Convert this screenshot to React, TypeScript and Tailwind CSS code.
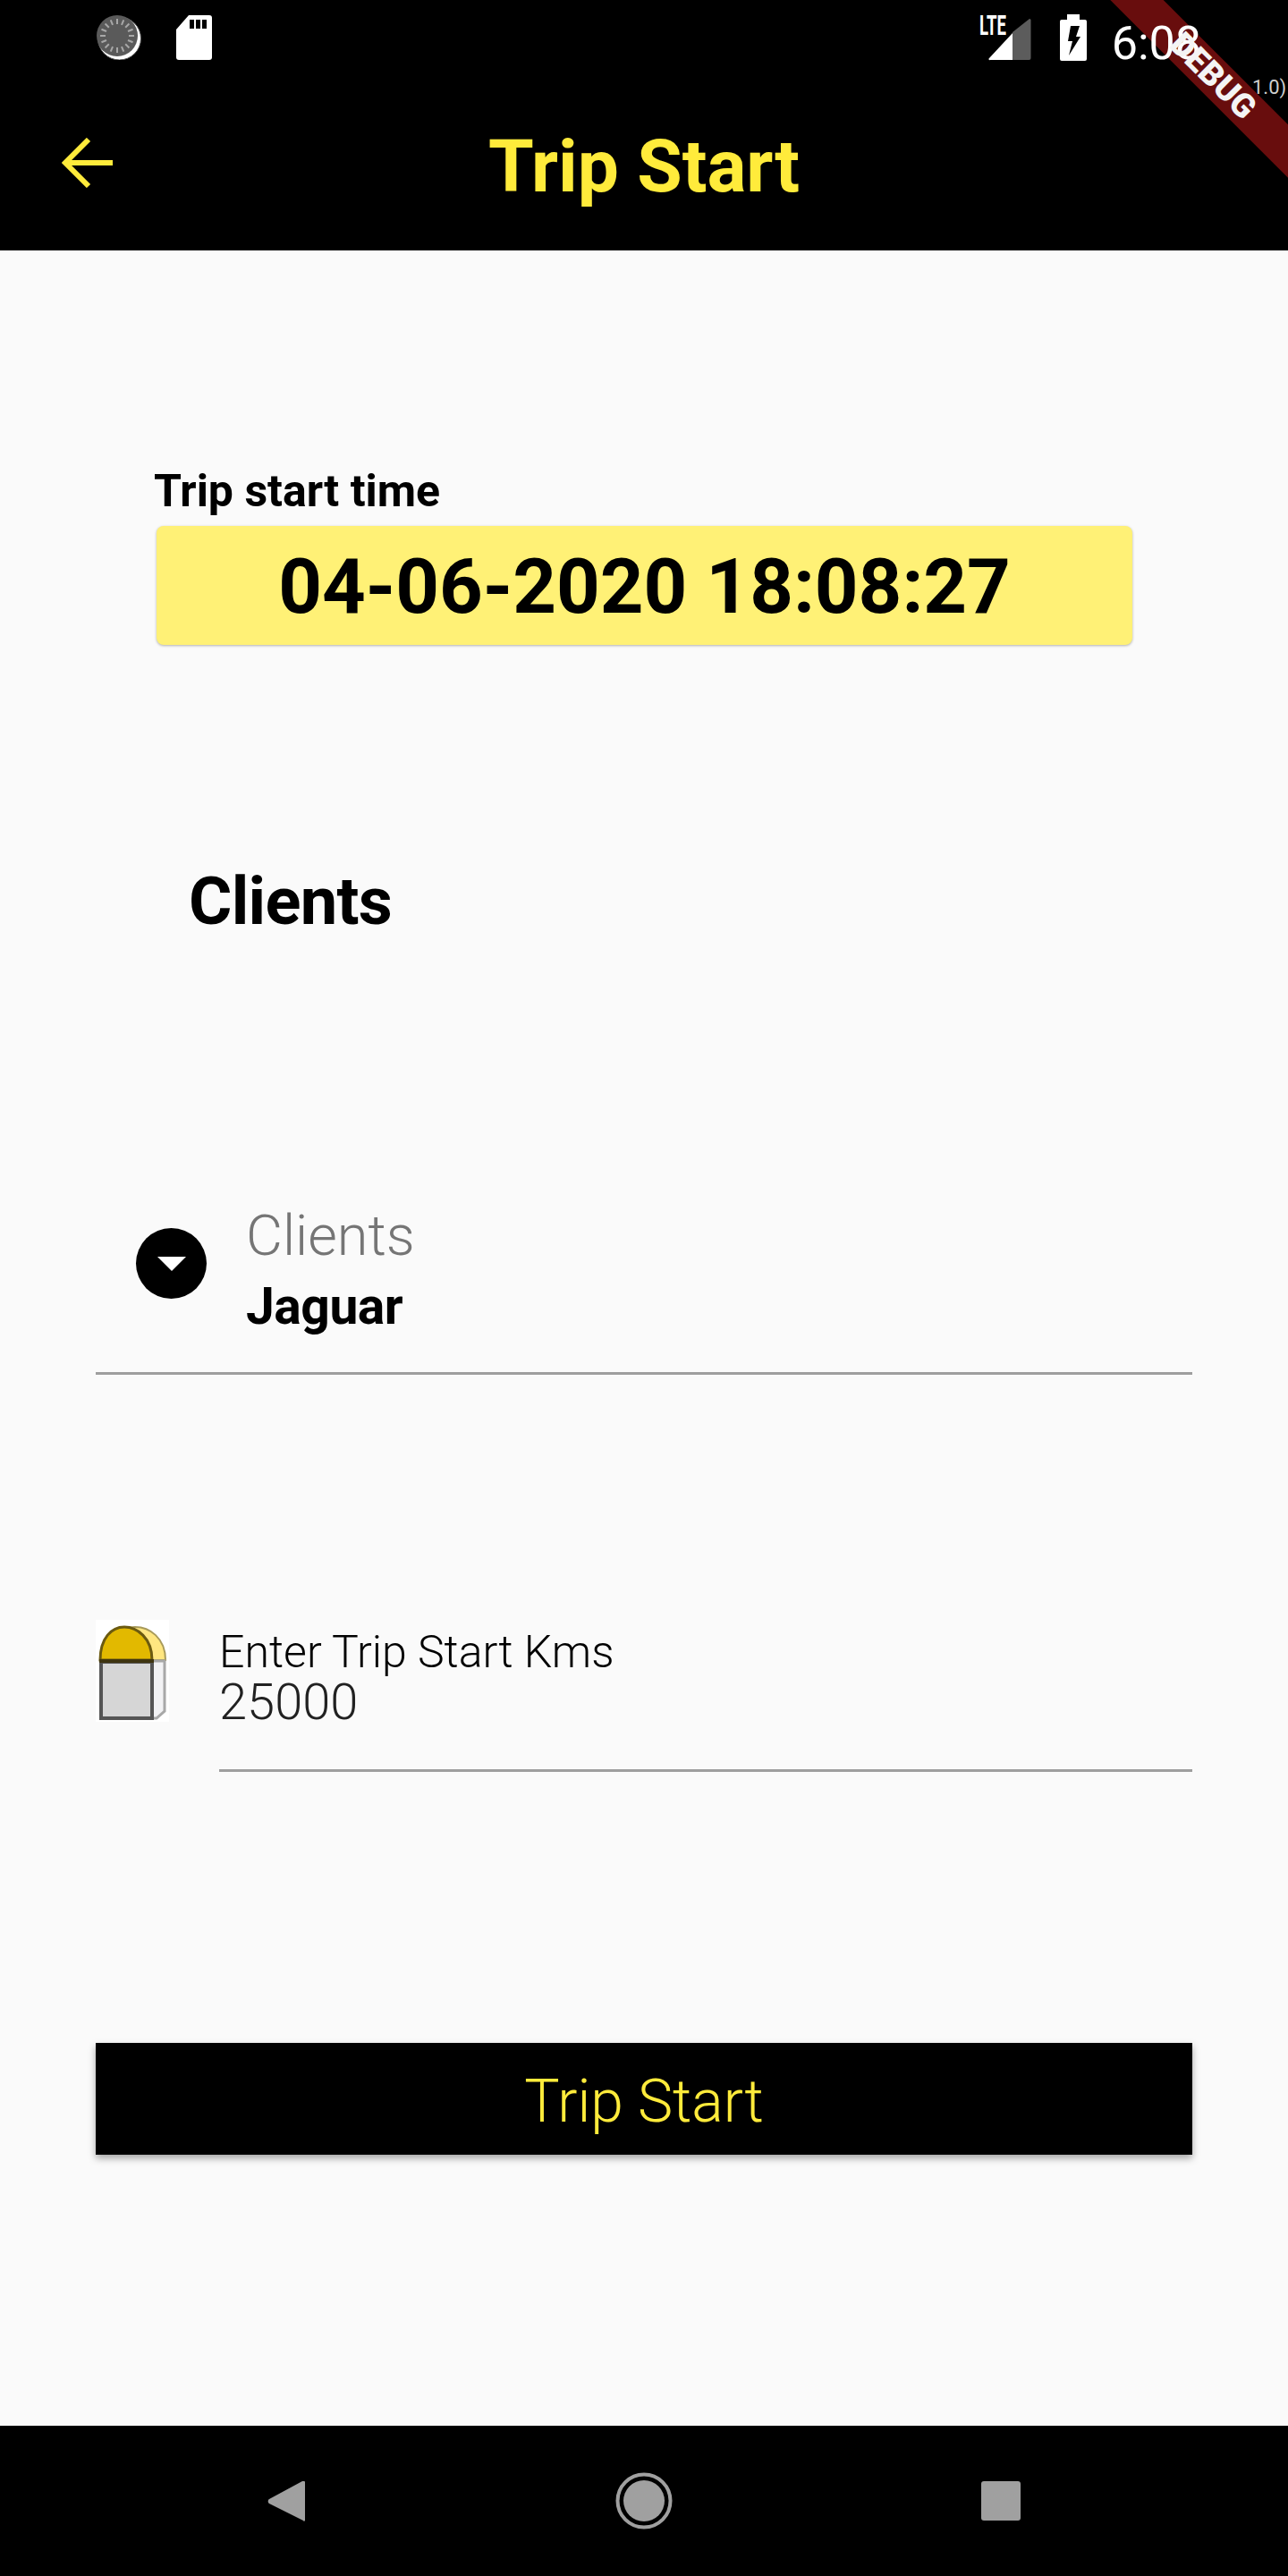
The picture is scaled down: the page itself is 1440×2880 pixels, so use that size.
const FONT = 'font-["Roboto",sans-serif]'

function SyncIcon() {
  const ticks = Array.from({ length: 16 }, (_, i) => i * 22.5)
  return (
    <svg width="50" height="50" viewBox="0 0 50 50" className="shrink-0">
      <circle cx="25.5" cy="26" r="24" fill="#fff" />
      <circle cx="25.5" cy="26" r="24" fill="none" stroke="#555" strokeWidth="1" />
      <circle cx="23" cy="23" r="23" fill="#5a5a5a" />
      {ticks.map((a) => (
        <line key={a} x1="23" y1="4" x2="23" y2="10" stroke="#a8a8a8" strokeWidth="2" transform={`rotate(${a} 23 23)`} />
      ))}
    </svg>
  )
}

function SdIcon() {
  return (
    <svg width="40" height="50" viewBox="0 0 40 50" className="shrink-0">
      <path d="M14 0H37a3 3 0 0 1 3 3V47a3 3 0 0 1-3 3H3a3 3 0 0 1-3-3V16Z" fill="#fff" />
      <rect x="15" y="5" width="5" height="10" fill="#000" />
      <rect x="22" y="5" width="5" height="10" fill="#000" />
      <rect x="29" y="5" width="5" height="10" fill="#000" />
    </svg>
  )
}

function SignalIcon() {
  return (
    <svg width="48" height="48" viewBox="0 0 48 48" className="shrink-0">
      <path d="M27 16 46 1a1.5 1.5 0 0 1 1.5 1.5V45a2 2 0 0 1-2 2H27Z" fill="#5c5c5c" />
      <path d="M27 17V47H2a1 1 0 0 1-1-2Z" fill="#fff" />
    </svg>
  )
}

function BatteryIcon() {
  return (
    <svg width="30" height="52" viewBox="0 0 30 52" className="shrink-0">
      <path d="M8 0H22V6H28a2 2 0 0 1 2 2V50a2 2 0 0 1-2 2H2a2 2 0 0 1-2-2V8a2 2 0 0 1 2-2H8Z" fill="#fff" />
      <path d="M12 13H22L18 25H23L10 46 14 30H9Z" fill="#000" />
    </svg>
  )
}

function BackArrow() {
  return (
    <svg width="58" height="56" viewBox="0 0 58 56" fill="none" stroke="#ffeb3b" strokeWidth="6">
      <path d="M57 28H4" />
      <path d="M30 2 4 28l26 26" strokeLinecap="butt" />
    </svg>
  )
}

function MilestoneIcon() {
  return (
    <svg width="82" height="114" viewBox="0 0 82 114" className="shrink-0 bg-white">
      <path d="M12 45C12 20 28 8 44 8s34 12 34 37Z" fill="#ffe680" stroke="#a89a5a" strokeWidth="2" />
      <path d="M5 45C5 20 18 8 32 8s31 12 31 37Z" fill="#e2b900" stroke="#6b5a10" strokeWidth="3" />
      <path d="M62 46H77V102L68 110H62Z" fill="#f2f2f4" stroke="#a8a8a8" strokeWidth="3" />
      <rect x="6" y="47" width="57" height="63" fill="#d6d6d6" stroke="#555" strokeWidth="4" />
      <path d="M4 46H65" stroke="#3f3510" strokeWidth="4" />
    </svg>
  )
}

export default function App() {
  return (
    <div className={`relative flex h-[2880px] w-[1440px] flex-col overflow-hidden bg-[#fafafa] ${FONT}`}>
      <header className="h-[280px] shrink-0 bg-black">
        <div className="flex h-[84px] items-start pt-[17px]">
          <div className="ml-[108px] flex gap-[39px]">
            <SyncIcon />
            <SdIcon />
          </div>
          <div className="ml-auto mr-[97px] flex items-start">
            <span className="mr-[-43px] mt-[-3px] origin-left scale-x-[0.6] text-[31px] leading-[30px] font-bold text-white">LTE</span>
            <div className="ml-[3px] mt-[3px]"><SignalIcon /></div>
            <div className="ml-[32px] mt-[-1px]"><BatteryIcon /></div>
            <span className="relative z-10 ml-[28px] mt-[7px] text-[52px] leading-[50px] text-white">6:08</span>
          </div>
        </div>
        <div className="relative flex h-[196px] items-start justify-center">
          <div className="absolute left-[69px] top-[70px]"><BackArrow /></div>
          <h1 className="mt-[52px] text-[82px] leading-[100px] font-bold text-[#ffeb3b]">Trip Start</h1>
        </div>
      </header>

      <main className="flex flex-1 flex-col">
        <div className="ml-[172px] mt-[239px] text-[50px] leading-[60px] font-bold text-black">Trip start time</div>
        <div className="ml-[175px] mt-[9px] flex h-[133px] w-[1091px] items-center justify-center rounded-[8px] bg-[#fff176] pt-[3px] shadow-[0_1px_3px_rgba(0,0,0,0.3)]">
          <span className="text-[85px] leading-none font-bold text-black">04-06-2020 18:08:27</span>
        </div>

        <h2 className="ml-[211px] mt-[242px] text-[74px] leading-[90px] font-bold tracking-[-0.7px] text-black">Clients</h2>

        <div className="mx-[107px] mt-[296px] flex h-[188px] items-start border-b-[3px] border-[#9e9e9e]">
          <div className="ml-[45px] mt-[24px] flex h-[79px] w-[79px] items-center justify-center rounded-full bg-black">
            <span className="h-0 w-0 border-x-[16px] border-t-[16px] border-x-transparent border-t-white" />
          </div>
          <div className="ml-[44px] flex flex-col">
            <span className="mt-[-3px] text-[63px] leading-[72px] font-light text-[#757575]">Clients</span>
            <span className="mt-[7px] text-[57px] leading-[72px] font-bold tracking-[-0.5px] text-black">Jaguar</span>
          </div>
        </div>

        <div className="mx-[107px] mt-[274px] flex items-start">
          <MilestoneIcon />
          <div className="ml-[56px] flex-1 border-b-[3px] border-[#9e9e9e] pb-[47px]">
            <div className="mt-[8px] text-[50px] leading-[56px] font-light text-black">Enter Trip Start Kms</div>
            <div className="text-[56px] leading-[56px] font-light text-[#212121]">25000</div>
          </div>
        </div>

        <button type="button" className="mx-[107px] mt-[303px] flex h-[125px] items-center justify-center bg-black pt-[6px] text-[66px] font-light text-[#ffeb3b] shadow-[0_4px_8px_rgba(0,0,0,0.35)]">
          Trip Start
        </button>
      </main>

      <nav className="flex h-[168px] shrink-0 items-center justify-between bg-black pl-[299px] pr-[299px]">
        <svg width="42" height="46" viewBox="0 0 42 46" fill="#a0a0a0">
          <path d="M41 1a1 1 0 0 1 1 1V44a1 1 0 0 1-2 1L2 26a3 3 0 0 1 0-5L39 1Z" />
        </svg>
        <svg width="64" height="64" viewBox="0 0 64 64" className="ml-[2px]">
          <circle cx="32" cy="32" r="29.5" fill="none" stroke="#a0a0a0" strokeWidth="4" />
          <circle cx="32" cy="32" r="23" fill="#a0a0a0" />
        </svg>
        <div className="h-[44px] w-[44px] rounded-[3px] bg-[#a0a0a0]" />
      </nav>

      <span className="absolute left-[1400px] top-[84px] text-[22px] leading-[28px] text-[#cfcfcf]">1.0)</span>
      <div className="absolute left-[1156px] top-[64px] z-20 flex h-[42px] w-[400px] rotate-45 items-center justify-center text-[37px] font-black text-[#f4f4f4]">
        DEBUG
      </div>
      <div className="absolute left-[1156px] top-[64px] h-[42px] w-[400px] rotate-45 bg-[#7a0f0f]/85" />
    </div>
  )
}
